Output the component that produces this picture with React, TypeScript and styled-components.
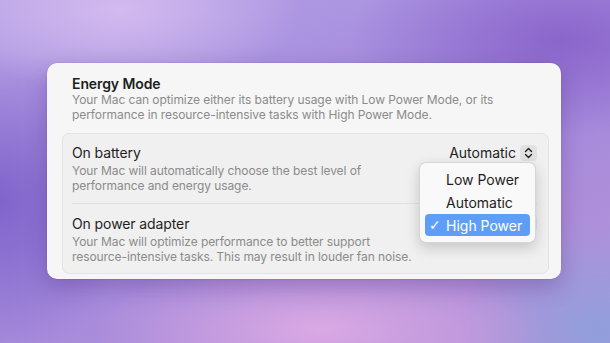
import React from "react";
import styled, { createGlobalStyle } from "styled-components";

const Global = createGlobalStyle`
  html, body { margin: 0; padding: 0; }
  body {
    width: 610px;
    height: 343px;
    overflow: hidden;
    font-family: Inter, "Noto Sans", "Liberation Sans", sans-serif;
    -webkit-font-smoothing: antialiased;
  }
`;

const Backdrop = styled.div`
  width: 610px;
  height: 343px;
  box-sizing: border-box;
  padding: 63px 49px 0 47px;
  background:
    radial-gradient(ellipse 260px 120px at 120px 10px, rgba(214, 190, 240, 0.9), transparent 70%),
    radial-gradient(ellipse 300px 140px at 560px 40px, rgba(135, 95, 200, 0.85), transparent 70%),
    radial-gradient(ellipse 200px 220px at 0px 200px, rgba(125, 95, 200, 0.9), transparent 70%),
    radial-gradient(ellipse 320px 110px at 320px 330px, rgba(220, 170, 228, 0.95), transparent 70%),
    radial-gradient(ellipse 200px 160px at 600px 330px, rgba(140, 160, 220, 0.9), transparent 70%),
    linear-gradient(160deg, #b9a3e6 0%, #a088dc 45%, #b893d8 100%);
`;

const Card = styled.section`
  width: 514px;
  height: 216px;
  box-sizing: border-box;
  padding: 12px 12px 5px 15px;
  background: #f6f6f6;
  border-radius: 10px;
  box-shadow: 0 8px 22px rgba(60, 30, 110, 0.28), 0 0 0 0.5px rgba(0, 0, 0, 0.08);
  display: flex;
  flex-direction: column;
  gap: 11px;
`;

const Header = styled.header`
  padding: 0 10px;
  display: flex;
  flex-direction: column;
`;

const Title = styled.div<{ $weight?: number }>`
  font-size: 14px;
  line-height: 17px;
  font-weight: ${(p) => p.$weight ?? 400};
  color: #1e1e1e;
  letter-spacing: -0.1px;
`;

const Desc = styled.div`
  font-size: 12px;
  line-height: 15px;
  color: #8b8b8b;
  letter-spacing: -0.08px;
`;

const Group = styled.div`
  position: relative;
  background: #f0f0f0;
  border: 1px solid #e4e4e4;
  border-radius: 7px;
  padding: 0 11px 0 9px;
  display: flex;
  flex-direction: column;
`;

const Row = styled.div<{ $top: number; $bottom: number; $divider?: boolean }>`
  display: flex;
  justify-content: space-between;
  align-items: flex-start;
  padding: ${(p) => p.$top}px 0 ${(p) => p.$bottom}px;
  border-bottom: ${(p) => (p.$divider ? "1px solid #e2e2e2" : "none")};
`;

const RowText = styled.div`
  display: flex;
  flex-direction: column;
  gap: 2px;
`;

const Popup = styled.div`
  display: flex;
  align-items: center;
  gap: 4px;
  font-size: 14px;
  line-height: 17px;
  color: #1e1e1e;
`;

const Stepper = styled.span`
  width: 17px;
  height: 16px;
  border-radius: 4px;
  background: #e1e1e1;
  display: inline-flex;
  align-items: center;
  justify-content: center;
`;

const Menu = styled.div`
  position: absolute;
  top: 28px;
  right: 12px;
  width: 117px;
  height: 81px;
  box-sizing: border-box;
  padding: 6px 5px;
  background: #f9f9f9;
  border-radius: 7px;
  border: 0.5px solid rgba(0, 0, 0, 0.14);
  box-shadow: 0 5px 14px rgba(0, 0, 0, 0.18);
  display: flex;
  flex-direction: column;
  gap: 1px;
  z-index: 2;
`;

const Item = styled.div<{ $selected?: boolean }>`
  position: relative;
  height: 22px;
  border-radius: 4px;
  padding-left: 21px;
  display: flex;
  align-items: center;
  font-size: 14px;
  color: ${(p) => (p.$selected ? "#ffffff" : "#1e1e1e")};
  background: ${(p) => (p.$selected ? "#5f9ef6" : "transparent")};
`;

const Check = styled.span`
  position: absolute;
  left: 4px;
  top: 50%;
  transform: translateY(-50%);
  font-size: 14px;
  font-weight: 700;
  font-family: "DejaVu Sans", sans-serif;
`;

const StepIcon = () => (
  <svg width="9" height="12" viewBox="0 0 9 12" fill="none">
    <path d="M1.5 4.5 L4.5 1.5 L7.5 4.5" stroke="#1e1e1e" strokeWidth="1.4" strokeLinecap="round" strokeLinejoin="round" />
    <path d="M1.5 7.5 L4.5 10.5 L7.5 7.5" stroke="#1e1e1e" strokeWidth="1.4" strokeLinecap="round" strokeLinejoin="round" />
  </svg>
);

export default function App() {
  return (
    <>
      <Global />
      <Backdrop>
        <Card>
          <Header>
            <Title $weight={600}>Energy Mode</Title>
            <Desc>
              Your Mac can optimize either its battery usage with Low Power Mode, or its
              <br />
              performance in resource-intensive tasks with High Power Mode.
            </Desc>
          </Header>
          <Group>
            <Row $top={10} $bottom={10} $divider>
              <RowText>
                <Title>On battery</Title>
                <Desc>
                  Your Mac will automatically choose the best level of
                  <br />
                  performance and energy usage.
                </Desc>
              </RowText>
              <Popup>
                Automatic
                <Stepper>
                  <StepIcon />
                </Stepper>
              </Popup>
            </Row>
            <Row $top={11} $bottom={9}>
              <RowText>
                <Title>On power adapter</Title>
                <Desc>
                  Your Mac will optimize performance to better support
                  <br />
                  resource-intensive tasks. This may result in louder fan noise.
                </Desc>
              </RowText>
              <Popup>
                <Stepper>
                  <StepIcon />
                </Stepper>
              </Popup>
            </Row>
            <Menu>
              <Item>Low Power</Item>
              <Item>Automatic</Item>
              <Item $selected>
                <Check>✓</Check>
                High Power
              </Item>
            </Menu>
          </Group>
        </Card>
      </Backdrop>
    </>
  );
}
